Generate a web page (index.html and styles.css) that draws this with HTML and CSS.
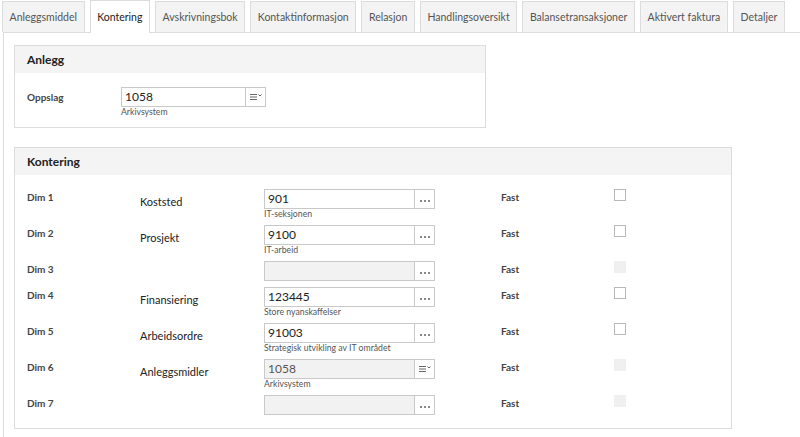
FILE: index.html
```html
<!DOCTYPE html>
<html lang="no">
<head>
    <meta charset="UTF-8">
    <title>Anleggsmiddel - Kontering</title>
    <link rel="stylesheet" href="styles.css">
</head>
<body>
    <nav class="tabs">
        <a class="tab">Anleggsmiddel</a>
        <a class="tab active">Kontering</a>
        <a class="tab">Avskrivningsbok</a>
        <a class="tab">Kontaktinformasjon</a>
        <a class="tab">Relasjon</a>
        <a class="tab">Handlingsoversikt</a>
        <a class="tab">Balansetransaksjoner</a>
        <a class="tab">Aktivert faktura</a>
        <a class="tab">Detaljer</a>
    </nav>

    <main class="page">
        <section class="panel panel-anlegg">
            <h2 class="panel-head">Anlegg</h2>
            <div class="panel-body">
                <div class="lookup-row">
                    <span class="dim">Oppslag</span>
                    <div class="field">
                        <div class="input">
                            <span class="value">1058</span>
                            <span class="btn"><svg width="12" height="8" viewBox="0 0 12 8"><path d="M0 1.5h7M0 4h7M0 6.5h7" stroke="#666" stroke-width="1.2"/><path d="M8.5 1.5l1.5 1.5 1.5-1.5" fill="none" stroke="#666" stroke-width="1"/></svg></span>
                        </div>
                        <div class="sub">Arkivsystem</div>
                    </div>
                </div>
            </div>
        </section>

        <section class="panel panel-kontering">
            <h2 class="panel-head">Kontering</h2>
            <div class="panel-body">
                <div class="row">
                    <span class="dim">Dim 1</span>
                    <span class="label">Koststed</span>
                    <div class="field">
                        <div class="input"><span class="value">901</span><span class="btn dots"><i></i><i></i><i></i></span></div>
                        <div class="sub">IT-seksjonen</div>
                    </div>
                    <span class="fast">Fast</span>
                    <span class="check"></span>
                </div>
                <div class="row">
                    <span class="dim">Dim 2</span>
                    <span class="label">Prosjekt</span>
                    <div class="field">
                        <div class="input"><span class="value">9100</span><span class="btn dots"><i></i><i></i><i></i></span></div>
                        <div class="sub">IT-arbeid</div>
                    </div>
                    <span class="fast">Fast</span>
                    <span class="check"></span>
                </div>
                <div class="row">
                    <span class="dim">Dim 3</span>
                    <span class="label"></span>
                    <div class="field">
                        <div class="input disabled"><span class="value"></span><span class="btn dots"><i></i><i></i><i></i></span></div>
                    </div>
                    <span class="fast">Fast</span>
                    <span class="check disabled"></span>
                </div>
                <div class="row">
                    <span class="dim">Dim 4</span>
                    <span class="label">Finansiering</span>
                    <div class="field">
                        <div class="input"><span class="value">123445</span><span class="btn dots"><i></i><i></i><i></i></span></div>
                        <div class="sub">Store nyanskaffelser</div>
                    </div>
                    <span class="fast">Fast</span>
                    <span class="check"></span>
                </div>
                <div class="row">
                    <span class="dim">Dim 5</span>
                    <span class="label">Arbeidsordre</span>
                    <div class="field">
                        <div class="input"><span class="value">91003</span><span class="btn dots"><i></i><i></i><i></i></span></div>
                        <div class="sub">Strategisk utvikling av IT området</div>
                    </div>
                    <span class="fast">Fast</span>
                    <span class="check"></span>
                </div>
                <div class="row">
                    <span class="dim">Dim 6</span>
                    <span class="label">Anleggsmidler</span>
                    <div class="field">
                        <div class="input disabled">
                            <span class="value">1058</span>
                            <span class="btn"><svg width="12" height="8" viewBox="0 0 12 8"><path d="M0 1.5h7M0 4h7M0 6.5h7" stroke="#666" stroke-width="1.2"/><path d="M8.5 1.5l1.5 1.5 1.5-1.5" fill="none" stroke="#666" stroke-width="1"/></svg></span>
                        </div>
                        <div class="sub">Arkivsystem</div>
                    </div>
                    <span class="fast">Fast</span>
                    <span class="check disabled"></span>
                </div>
                <div class="row">
                    <span class="dim">Dim 7</span>
                    <span class="label"></span>
                    <div class="field">
                        <div class="input disabled"><span class="value"></span><span class="btn dots"><i></i><i></i><i></i></span></div>
                    </div>
                    <span class="fast">Fast</span>
                    <span class="check disabled"></span>
                </div>
            </div>
        </section>
    </main>
</body>
</html>
```

FILE: styles.css
```css
body {
    font-family: Lato, "Open Sans", Arial, sans-serif;
    color: #333;
    background-color: #fff;
    margin: 0;
    padding: 0;
}
.tabs {
    display: flex;
    align-items: flex-end;
    gap: 5px;
    padding: 1px 0 0 2px;
    height: 32px;
    box-sizing: border-box;
}
.tab {
    display: flex;
    align-items: center;
    height: 31px;
    box-sizing: border-box;
    padding: 0 6.6px;
    background-color: #f3f3f3;
    border: 1px solid #dcdcdc;
    border-bottom: none;
    font-size: 10.5px;
    color: #555;
    white-space: nowrap;
    cursor: pointer;
}
.tab.active {
    height: 33px;
    margin-bottom: -1px;
    background-color: #fff;
    color: #222;
    position: relative;
    z-index: 1;
}
.page {
    margin-left: 3px;
    border-top: 1px solid #dcdcdc;
    border-left: 1px solid #dcdcdc;
    border-bottom: 1px solid #dcdcdc;
    padding: 12px 0 8px 10px;
}
.panel {
    border: 1px solid #dcdcdc;
}
.panel-anlegg {
    width: 470px;
    margin-bottom: 19px;
}
.panel-kontering {
    width: 716px;
}
.panel-head {
    margin: 0;
    height: 27px;
    line-height: 27px;
    padding-left: 12px;
    background-color: #f3f4f3;
    font-size: 12px;
    font-weight: bold;
    color: #222;
}
.panel-anlegg .panel-body {
    padding: 14px 12px 10px;
}
.panel-kontering .panel-body {
    padding: 14px 12px 7px;
}
.lookup-row {
    display: flex;
}
.lookup-row .dim {
    width: 94px;
    padding-top: 4px;
}
.lookup-row .input {
    width: 145px;
}
.row {
    display: flex;
    align-items: flex-start;
    margin-bottom: 6px;
}
.dim {
    width: 113px;
    font-size: 10px;
    font-weight: bold;
    color: #444;
    padding-top: 2px;
}
.label {
    width: 124px;
    font-size: 11px;
    color: #222;
    padding-top: 6px;
}
.field {
    width: 171px;
    margin-right: 66px;
}
.input {
    display: flex;
    height: 20px;
    box-sizing: border-box;
    border: 1px solid #c9c9c9;
    background-color: #fff;
}
.input.disabled {
    background-color: #f2f2f2;
}
.value {
    flex: 1;
    padding-left: 3px;
    font-size: 12px;
    line-height: 18px;
    color: #222;
}
.input.disabled .value {
    color: #555;
}
.btn {
    width: 19px;
    border-left: 1px solid #c9c9c9;
    background-color: #fff;
    display: flex;
    align-items: center;
    justify-content: center;
}
.btn.dots {
    gap: 2px;
    padding-top: 4px;
}
.btn.dots i {
    width: 2px;
    height: 2px;
    background-color: #888;
}
.sub {
    font-size: 8.7px;
    color: #555;
    line-height: 10px;
}
.fast {
    width: 113px;
    font-size: 10px;
    font-weight: bold;
    color: #444;
    padding-top: 2px;
}
.check {
    width: 12px;
    height: 12px;
    box-sizing: border-box;
    border: 1px solid #b8b8b8;
    background-color: #fff;
}
.check.disabled {
    border-color: #f0f0f0;
    background-color: #f0f0f0;
}
```
